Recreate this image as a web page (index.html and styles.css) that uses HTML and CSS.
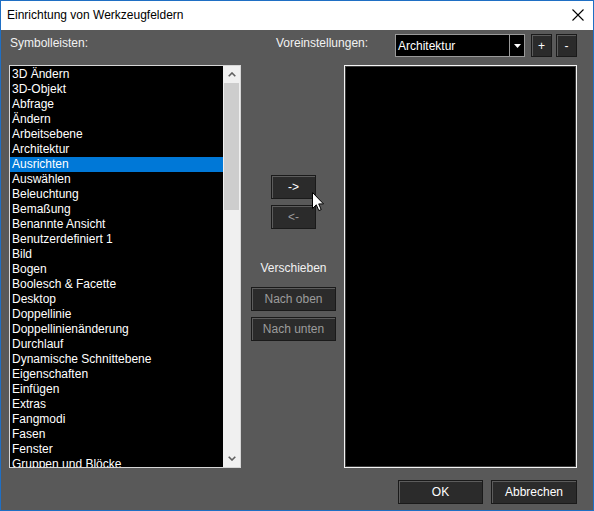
FILE: index.html
```html
<!DOCTYPE html>
<html lang="de">
<head>
<meta charset="utf-8">
<title>Einrichtung von Werkzeugfeldern</title>
<link rel="stylesheet" href="styles.css">
</head>
<body>
<div class="window">
  <div class="titlebar">
    <span class="title">Einrichtung von Werkzeugfeldern</span>
    <span class="close"><svg width="12" height="12" viewBox="0 0 12 12"><path d="M0.5 0.5 L11.5 11.5 M11.5 0.5 L0.5 11.5" stroke="#000" stroke-width="1.1" fill="none"/></svg></span>
  </div>
  <div class="content">
    <div class="toprow">
      <span class="label lbl-left">Symbolleisten:</span>
      <span class="label lbl-preset">Voreinstellungen:</span>
      <div class="combo">
        <span class="combo-text">Architektur</span>
        <span class="combo-btn"><svg width="7" height="4" viewBox="0 0 7 4"><path d="M0 0 H7 L3.5 4 Z" fill="#fff"/></svg></span>
      </div>
      <button class="btn small">+</button>
      <button class="btn small">-</button>
    </div>
    <div class="mainrow">
      <div class="listbox left">
        <ul class="items">
          <li>3D Ändern</li>
          <li>3D-Objekt</li>
          <li>Abfrage</li>
          <li>Ändern</li>
          <li>Arbeitsebene</li>
          <li>Architektur</li>
          <li class="sel">Ausrichten</li>
          <li>Auswählen</li>
          <li>Beleuchtung</li>
          <li>Bemaßung</li>
          <li>Benannte Ansicht</li>
          <li>Benutzerdefiniert 1</li>
          <li>Bild</li>
          <li>Bogen</li>
          <li>Boolesch &amp; Facette</li>
          <li>Desktop</li>
          <li>Doppellinie</li>
          <li>Doppellinienänderung</li>
          <li>Durchlauf</li>
          <li>Dynamische Schnittebene</li>
          <li>Eigenschaften</li>
          <li>Einfügen</li>
          <li>Extras</li>
          <li>Fangmodi</li>
          <li>Fasen</li>
          <li>Fenster</li>
          <li>Gruppen und Blöcke</li>
        </ul>
        <div class="scrollbar">
          <div class="arrow"><svg width="8" height="5" viewBox="0 0 8 5"><path d="M0.7 4.3 L4 1 L7.3 4.3" stroke="#606060" stroke-width="1.6" fill="none"/></svg></div>
          <div class="track"><div class="thumb"></div></div>
          <div class="arrow"><svg width="8" height="5" viewBox="0 0 8 5"><path d="M0.7 0.7 L4 4 L7.3 0.7" stroke="#606060" stroke-width="1.6" fill="none"/></svg></div>
        </div>
      </div>
      <div class="middle">
        <button class="btn arrowbtn">-&gt;</button>
        <button class="btn arrowbtn disabled">&lt;-</button>
        <span class="label move">Verschieben</span>
        <button class="btn wide disabled first">Nach oben</button>
        <button class="btn wide disabled">Nach unten</button>
      </div>
      <div class="listbox right"></div>
    </div>
    <div class="bottomrow">
      <button class="btn dlg">OK</button>
      <button class="btn dlg cancel">Abbrechen</button>
    </div>
  </div>
  <svg class="cursor" width="13" height="20" viewBox="0 0 13 20"><path d="M0.5 0.5 L0.5 16.5 L4.3 12.8 L6.8 18.6 L9.2 17.6 L6.7 11.9 L11.5 11.9 Z" fill="#fff" stroke="#000" stroke-width="1"/></svg>
</div>
</body>
</html>
```

FILE: styles.css
```css
* { box-sizing: border-box; }
html, body { margin: 0; padding: 0; }
body {
  font-family: "Liberation Sans", Arial, sans-serif;
  font-size: 12px;
  background: #595959;
}
.window {
  position: relative;
  width: 594px;
  height: 511px;
  border: 1px solid #1f6fc4;
  display: flex;
  flex-direction: column;
  overflow: hidden;
}
.titlebar {
  height: 29px;
  background: #fff;
  display: flex;
  align-items: center;
  padding-left: 6px;
  padding-bottom: 2px;
  flex: none;
}
.title { color: #000; font-size: 12px; flex: 1; }
.close { width: 12px; height: 12px; margin-right: 9px; display: flex; }
.content {
  flex: 1;
  background: #595959;
  padding: 4px 16px 6px 8px;
  display: flex;
  flex-direction: column;
  color: #f0f0f0;
}
.toprow {
  height: 23px;
  display: flex;
  align-items: center;
  flex: none;
}
.label { color: #f2f2f2; }
.lbl-left { width: 267px; padding-left: 1px; align-self: flex-start; padding-top: 2px; }
.lbl-preset { flex: 1; align-self: flex-start; padding-top: 2px; }
.combo {
  width: 130px;
  height: 23px;
  border: 1px solid #9a9a9a;
  background: #000;
  display: flex;
  margin-right: 6px;
}
.combo-text { flex: 1; color: #fff; padding-left: 2px; line-height: 22px; }
.combo-btn {
  width: 15px;
  border-left: 1px solid #9a9a9a;
  display: flex;
  align-items: center;
  justify-content: center;
}
.btn {
  font-family: inherit;
  font-size: 12px;
  color: #fff;
  background: #2b2b2b;
  border: 1px solid #1a1a1a;
  box-shadow: inset 1px 1px 0 #5c5c5c;
  padding: 0;
  margin: 0;
  display: flex;
  align-items: center;
  justify-content: center;
}
.btn.disabled { color: #9c9c9c; }
.btn.small { width: 21px; height: 23px; margin-right: 4px; }
.btn.small:last-child { margin-right: 0; }
.mainrow {
  flex: none;
  height: 403px;
  margin-top: 8px;
  display: flex;
}
.listbox {
  background: #000;
  height: 403px;
}
.listbox.left {
  width: 232px;
  border: 1px solid #d6d6d6;
  display: flex;
}
.items {
  list-style: none;
  margin: 0;
  padding: 1px 0 0 0;
  flex: 1;
  overflow: hidden;
}
.items li {
  height: 15px;
  line-height: 15px;
  padding-left: 2px;
  color: #fff;
  white-space: nowrap;
}
.items li.sel { background: #0078d7; }
.scrollbar {
  width: 17px;
  background: #f0f0f0;
  display: flex;
  flex-direction: column;
}
.arrow {
  height: 17px;
  display: flex;
  align-items: center;
  justify-content: center;
  flex: none;
}
.track { flex: 1; padding: 0 1px; }
.thumb { height: 127px; background: #cdcdcd; }
.middle {
  width: 103px;
  display: flex;
  flex-direction: column;
  align-items: center;
  padding-top: 110px;
  padding-left: 2px;
}
.arrowbtn { width: 45px; height: 24px; margin-bottom: 6px; }
.move { height: 16px; line-height: 16px; margin-top: 25px; }
.wide { width: 85px; height: 24px; margin-top: 6px; }
.wide.first { margin-top: 11px; }
.listbox.right {
  width: 233px;
  border: 1px solid #f4f4f4;
  box-shadow: inset 0 0 0 1px #3a3a3a;
}
.bottomrow {
  flex: none;
  margin-top: 12px;
  display: flex;
  justify-content: flex-end;
}
.dlg { width: 85px; height: 24px; }
.dlg.cancel { margin-left: 8px; width: 86px; }
.cursor { position: absolute; left: 311px; top: 191px; }
```
